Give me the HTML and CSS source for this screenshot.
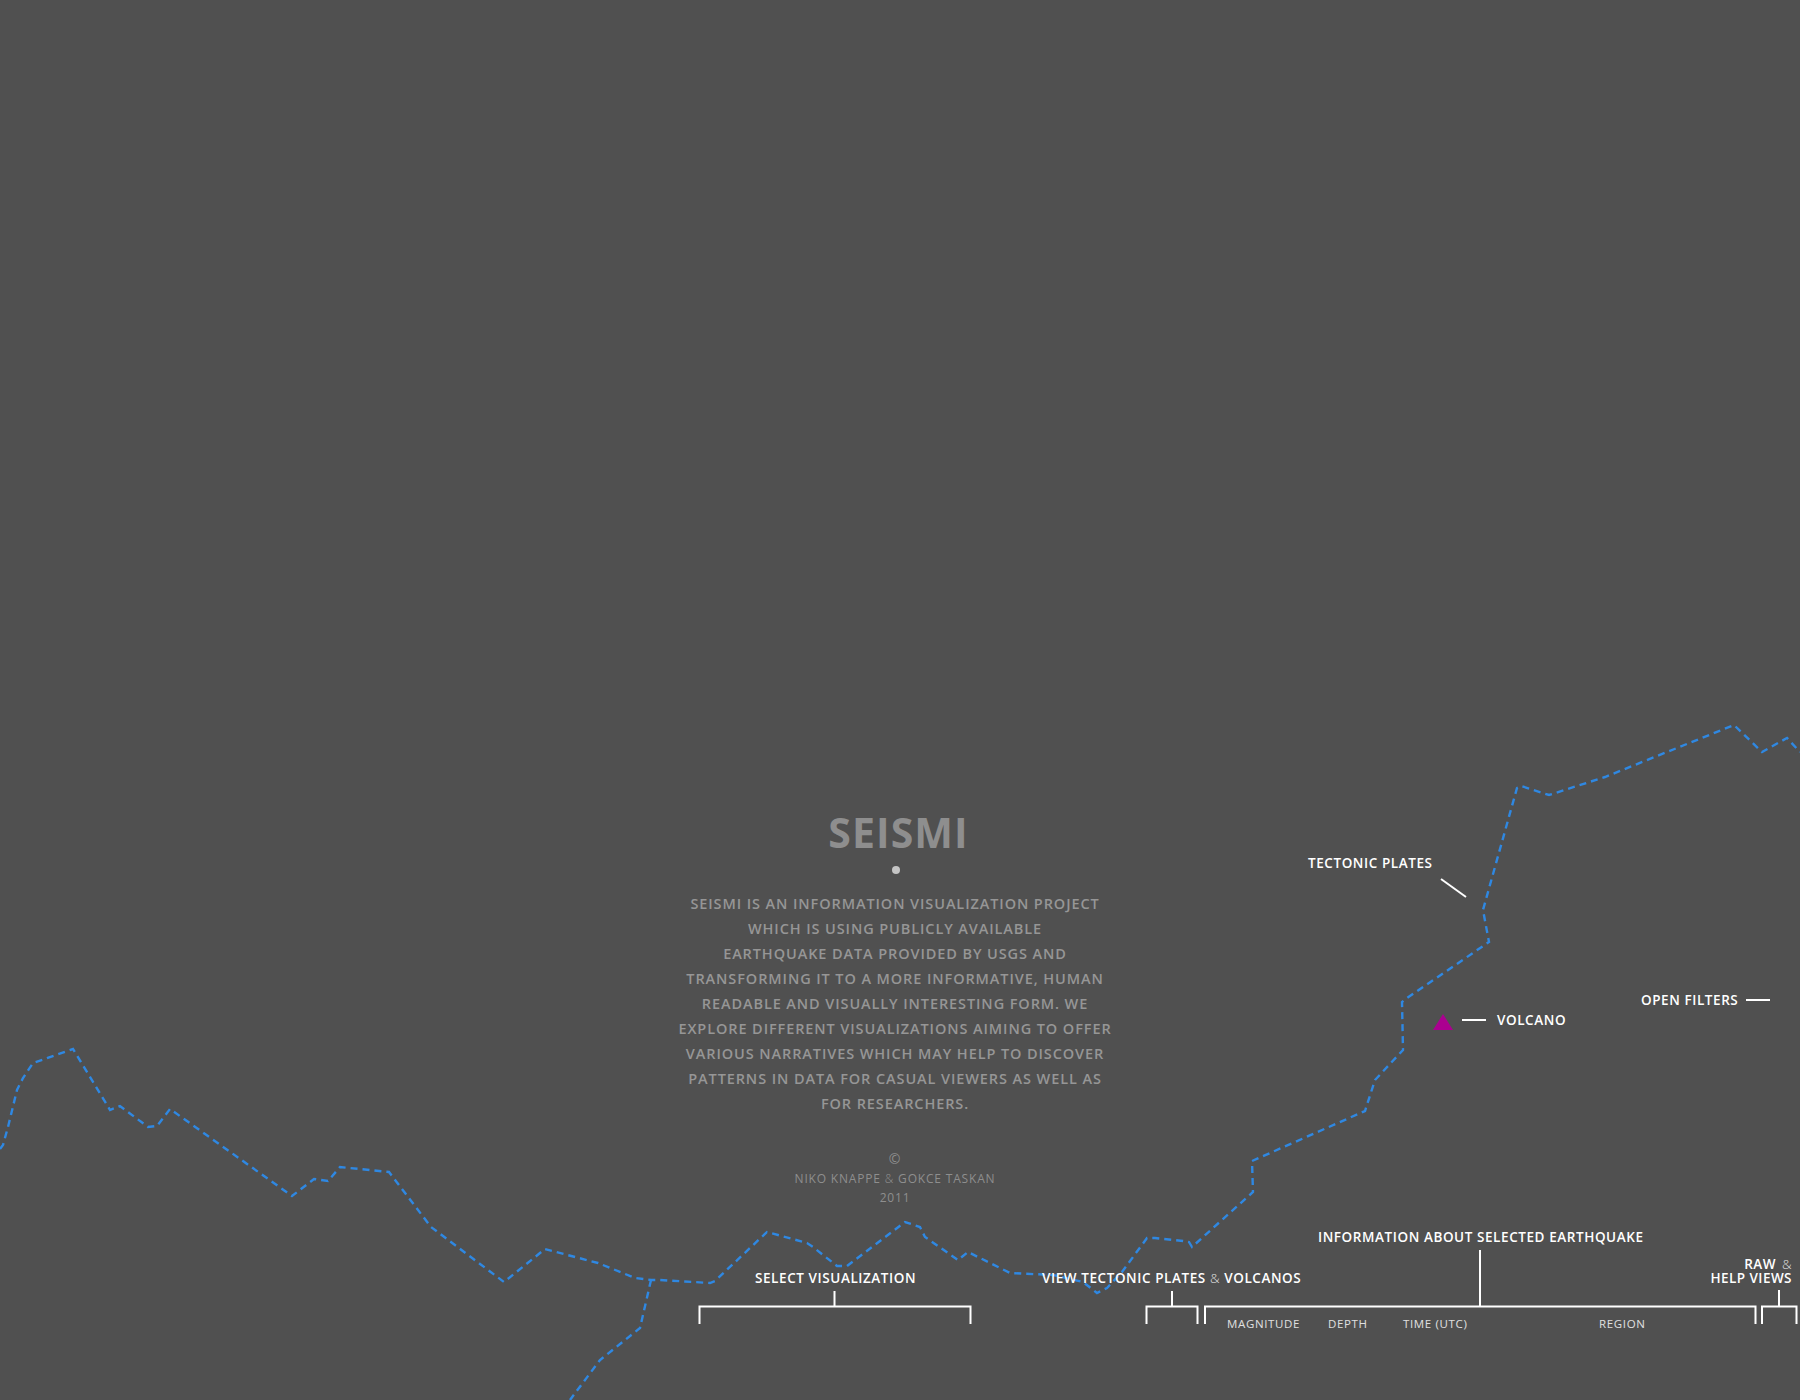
FILE: index.html
```html
<!DOCTYPE html>
<html lang="en">
<head>
<meta charset="utf-8">
<title>Seismi</title>
<link rel="stylesheet" href="styles.css">
</head>
<body>
<main class="stage">
  <svg class="plates" width="1800" height="1400" viewBox="0 0 1800 1400" aria-hidden="true">
    <path class="plate" d="M0 1149L3 1145L8 1127L17 1090L23 1078L33 1063L73 1049L110 1110L120 1106L148 1127L157 1126L170 1109L292 1196L314 1179L328 1181L340 1167L389 1172L431 1227L504 1282L545 1249L556 1252L598 1263L635 1278L651 1280L660 1280L710 1283L715 1281L767 1232L807 1243L813 1247L837 1266L847 1266L905 1222L920 1227L925 1237L958 1260L968 1252L1010 1273L1053 1275L1083 1282L1097 1293L1107 1288L1122 1272L1147 1238L1155 1238L1183 1241L1189 1242L1192 1247L1253 1192L1252 1161L1365 1111L1375 1080L1403 1050L1402 1002L1407 998L1489 942L1483 910L1517 788L1521 786L1549 795L1605 777L1734 725L1762 752L1787 738L1800 752"/>
    <path class="plate" d="M651 1280L640 1328L600 1360L570 1400"/>
    <path class="leader" d="M1441 879L1466 897"/>
    <path class="leader" d="M1462 1020H1486"/>
    <path class="leader" d="M1746 1000H1770"/>
    <path class="leader" d="M834.5 1291V1306M699.5 1324V1306.5H970.5V1324"/>
    <path class="leader" d="M1172 1291V1306M1146.5 1324V1306.5H1197.5V1324"/>
    <path class="leader" d="M1480 1250V1306M1205 1324V1306.5H1755.5V1324"/>
    <path class="leader" d="M1779 1290V1306M1762 1324V1306.5H1796.5V1324"/>
    <polygon class="volcano" points="1433,1030 1453,1030 1443,1014"/>
  </svg>

  <section class="intro">
    <h1 class="intro-title">SEISMI</h1>
    <span class="intro-dot"></span>
    <p class="intro-text">SEISMI IS AN INFORMATION VISUALIZATION PROJECT<br>WHICH IS USING PUBLICLY AVAILABLE<br>EARTHQUAKE DATA PROVIDED BY USGS AND<br>TRANSFORMING IT TO A MORE INFORMATIVE, HUMAN<br>READABLE AND VISUALLY INTERESTING FORM. WE<br>EXPLORE DIFFERENT VISUALIZATIONS AIMING TO OFFER<br>VARIOUS NARRATIVES WHICH MAY HELP TO DISCOVER<br>PATTERNS IN DATA FOR CASUAL VIEWERS AS WELL AS<br>FOR RESEARCHERS.</p>
    <p class="intro-credit"><span class="copyright">©</span><br>NIKO KNAPPE <span class="amp">&amp;</span> GOKCE TASKAN<br>2011</p>
  </section>

  <span class="note note-plates">TECTONIC PLATES</span>
  <span class="note note-volcano">VOLCANO</span>
  <span class="note note-filters">OPEN FILTERS</span>
  <span class="note note-select">SELECT VISUALIZATION</span>
  <span class="note note-view">VIEW TECTONIC PLATES <span class="amp">&amp;</span> VOLCANOS</span>
  <span class="note note-info">INFORMATION ABOUT SELECTED EARTHQUAKE</span>
  <span class="note note-raw">RAW <span class="amp amp-raw">&amp;</span><br>HELP VIEWS</span>
  <span class="field field-magnitude">MAGNITUDE</span>
  <span class="field field-depth">DEPTH</span>
  <span class="field field-time">TIME (UTC)</span>
  <span class="field field-region">REGION</span>
</main>
</body>
</html>
```
FILE: styles.css
```css
html, body {
  margin: 0;
  padding: 0;
  background: #505050;
}
.stage {
  position: relative;
  width: 1800px;
  height: 1400px;
  overflow: hidden;
  background: #505050;
  font-family: "Open Sans", "Noto Sans", sans-serif;
}
.plates {
  position: absolute;
  left: 0;
  top: 0;
}
.plate {
  fill: none;
  stroke: #2f88e2;
  stroke-width: 2.4;
  stroke-dasharray: 7 5;
}
.leader {
  fill: none;
  stroke: #fff;
  stroke-width: 2;
}
.volcano {
  fill: #ab0090;
}
.intro {
  position: absolute;
  left: 645px;
  top: 806px;
  width: 500px;
  display: flex;
  flex-direction: column;
  align-items: center;
  text-align: center;
}
.intro-title {
  margin: 0 0 0 7px;
  font-size: 41px;
  line-height: 52px;
  font-weight: 700;
  letter-spacing: 1.1px;
  color: #8e8e8e;
}
.intro-dot {
  width: 8px;
  height: 8px;
  margin-top: 8px;
  margin-left: 2px;
  border-radius: 50%;
  background: #c4c4c4;
}
.intro-text {
  margin: 17px 0 0;
  font-size: 14.5px;
  line-height: 25px;
  font-weight: 600;
  letter-spacing: 0.9px;
  color: #969696;
}
.intro-credit {
  margin: 34px 0 0;
  font-size: 12px;
  line-height: 19px;
  letter-spacing: 0.82px;
  color: #8e8e8e;
}
.copyright {
  font-size: 14px;
  line-height: 0;
}
.amp {
  font-weight: 300;
  color: #dcdcdc;
}
.amp-raw {
  margin-left: 2px;
}
.intro-credit .amp {
  color: #8e8e8e;
}
.note {
  position: absolute;
  font-size: 13.5px;
  line-height: 14px;
  font-weight: 600;
  letter-spacing: 0.58px;
  color: #fff;
  white-space: nowrap;
}
.field {
  position: absolute;
  top: 1316px;
  font-size: 11.5px;
  line-height: 15px;
  letter-spacing: 0.65px;
  color: #e0e0e0;
  white-space: nowrap;
}
.note-plates { left: 1308px; top: 856px; }
.note-volcano { left: 1497px; top: 1013px; }
.note-filters { left: 1641px; top: 993px; }
.note-select { left: 755px; top: 1271px; }
.note-view { left: 1042px; top: 1271px; }
.note-info { left: 1318px; top: 1230px; }
.note-raw { right: 8px; top: 1257px; text-align: right; letter-spacing: 0.45px; }
.field-magnitude { left: 1227px; }
.field-depth { left: 1328px; }
.field-time { left: 1403px; }
.field-region { left: 1599px; }
```
